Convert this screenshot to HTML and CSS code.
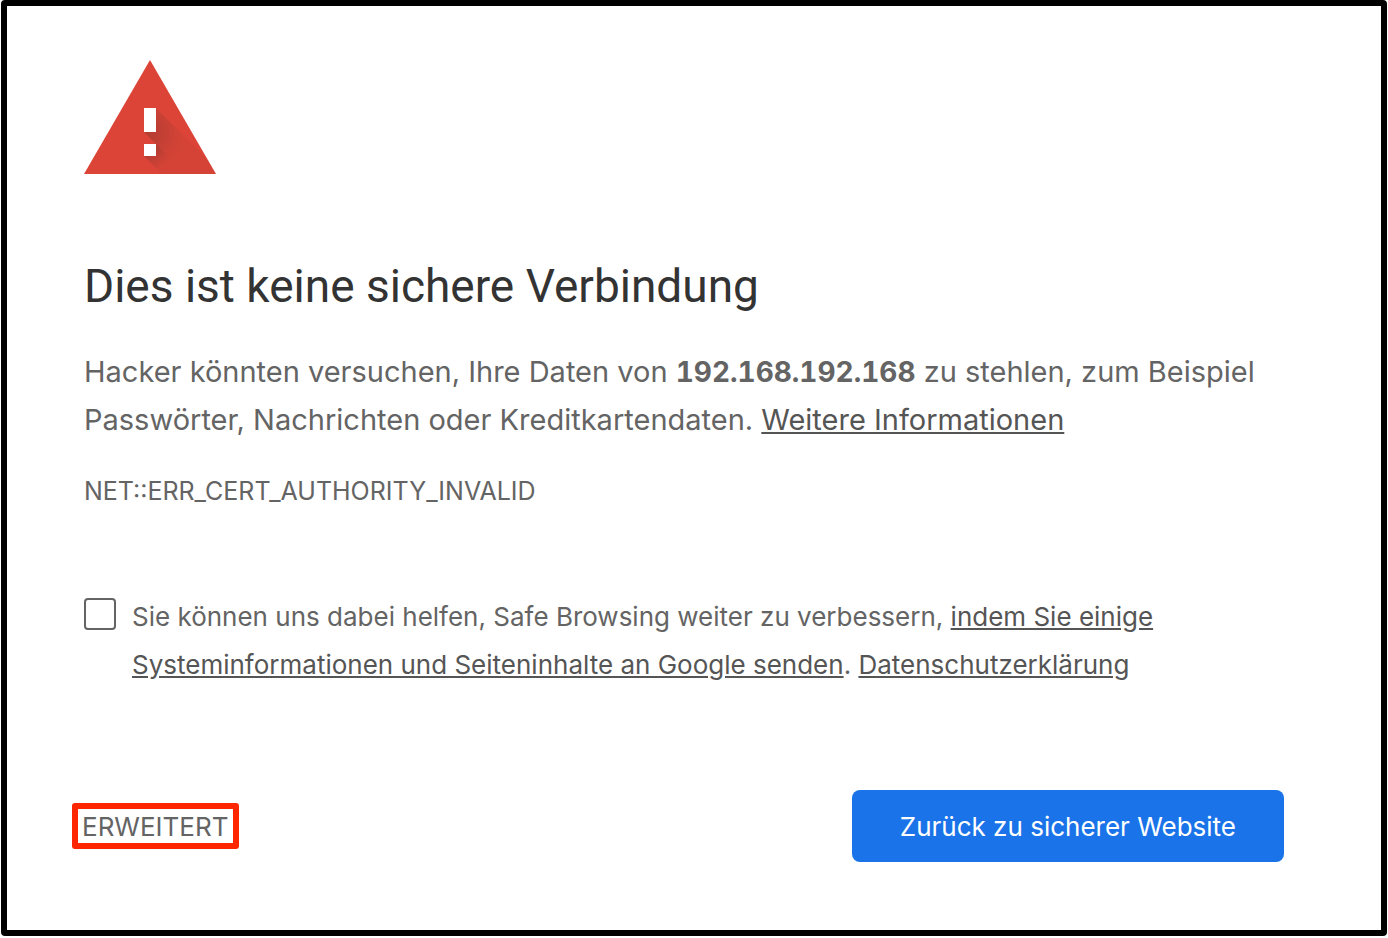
FILE: index.html
```
<!DOCTYPE html>
<html lang="de">
<head>
  <meta charset="UTF-8">
  <meta name="viewport" content="width=device-width, initial-scale=1.0">
  <title>Datenschutzfehler</title>
  <link rel="stylesheet" href="styles.css">
</head>
<body>
  <main class="interstitial">
    <svg class="icon" viewBox="0 0 132 114" aria-hidden="true">
      <defs>
        <radialGradient id="shadow" gradientUnits="userSpaceOnUse" cx="64" cy="72" r="40">
          <stop offset="0" stop-color="#3e2723" stop-opacity="0.24"/>
          <stop offset="0.3" stop-color="#3e2723" stop-opacity="0.18"/>
          <stop offset="0.7" stop-color="#3e2723" stop-opacity="0.07"/>
          <stop offset="1" stop-color="#3e2723" stop-opacity="0.04"/>
        </radialGradient>
        <linearGradient id="dot-shadow" gradientUnits="userSpaceOnUse" x1="68" y1="92" x2="80" y2="104">
          <stop offset="0" stop-color="#3e2723" stop-opacity="0.14"/>
          <stop offset="1" stop-color="#3e2723" stop-opacity="0"/>
        </linearGradient>
      </defs>
      <path fill="#db4437" d="M66 0l66 114H0z"/>
      <path fill="url(#shadow)" d="M72 48l52 52 8 14H78L60 96l12-12-12-12z"/>
      <path fill="url(#dot-shadow)" d="M72 84l30 30H78L60 96z"/>
      <path fill="#fff" d="M60 48h12v24H60zM60 84h12v12H60z"/>
    </svg>

    <h1>Dies ist keine sichere Verbindung</h1>
    <p class="message">Hacker könnten versuchen, Ihre Daten von <strong>192.168.192.168</strong> zu stehlen, zum Beispiel Passwörter, Nachrichten oder Kreditkartendaten. <a href="#">Weitere Informationen</a></p>
    <div class="error-code">NET::ERR_CERT_AUTHORITY_INVALID</div>

    <div class="opt-in">
      <input type="checkbox" id="opt-in-checkbox">
      <label for="opt-in-checkbox">Sie können uns dabei helfen, Safe Browsing weiter zu verbessern, <a href="#">indem Sie einige Systeminformationen und Seiteninhalte an Google senden</a>. <a href="#">Datenschutzerklärung</a></label>
    </div>

    <div class="buttons">
      <button type="button" class="details-button">ERWEITERT</button>
      <button type="button" class="primary-button">Zurück zu sicherer Website</button>
    </div>
  </main>
</body>
</html>
```
FILE: styles.css
```
* {
  box-sizing: border-box;
}

body {
  margin: 0;
  background: #fff;
  color: #646464;
  font-family: Inter, "Liberation Sans", sans-serif;
}

.interstitial {
  min-height: calc(100vh - 2px);
  margin: 0 1px 2px;
  padding: 54px 97px 60px 77px;
  border: 6px solid #000;
  border-radius: 4px;
}

.icon {
  display: block;
  width: 132px;
  height: 114px;
}

h1 {
  margin: 80px 0 30px;
  color: #333;
  font-family: Roboto, "Liberation Sans", sans-serif;
  font-size: 46px;
  font-weight: 400;
  line-height: 64px;
}

.message {
  margin: 0;
  font-size: 29px;
  line-height: 48px;
}

.message strong {
  font-size: 28px;
  font-variant-numeric: tabular-nums;
}

a {
  color: #555;
  text-decoration: underline;
}

.error-code {
  margin-top: 23px;
  font-size: 25px;
  line-height: 48px;
}

.opt-in {
  display: flex;
  gap: 16px;
  margin-top: 78px;
  font-size: 26px;
  line-height: 48px;
}

.opt-in input {
  flex: none;
  width: 32px;
  height: 32px;
  margin: 5px 0 0;
  appearance: none;
  background: #fff;
  border: 2px solid #646464;
  border-radius: 4px;
}

.buttons {
  display: flex;
  align-items: center;
  justify-content: space-between;
  margin-top: 101px;
}

button {
  font-family: inherit;
  font-size: 26px;
}

.details-button {
  height: 46px;
  margin-left: -12px;
  padding: 0 4px;
  background: #fff;
  border: 6px solid #ff2600;
  border-radius: 3px;
  color: #646464;
}

.primary-button {
  height: 72px;
  padding: 0 48px;
  background: #1a73e8;
  border: 0;
  border-radius: 8px;
  color: #fff;
}
```
